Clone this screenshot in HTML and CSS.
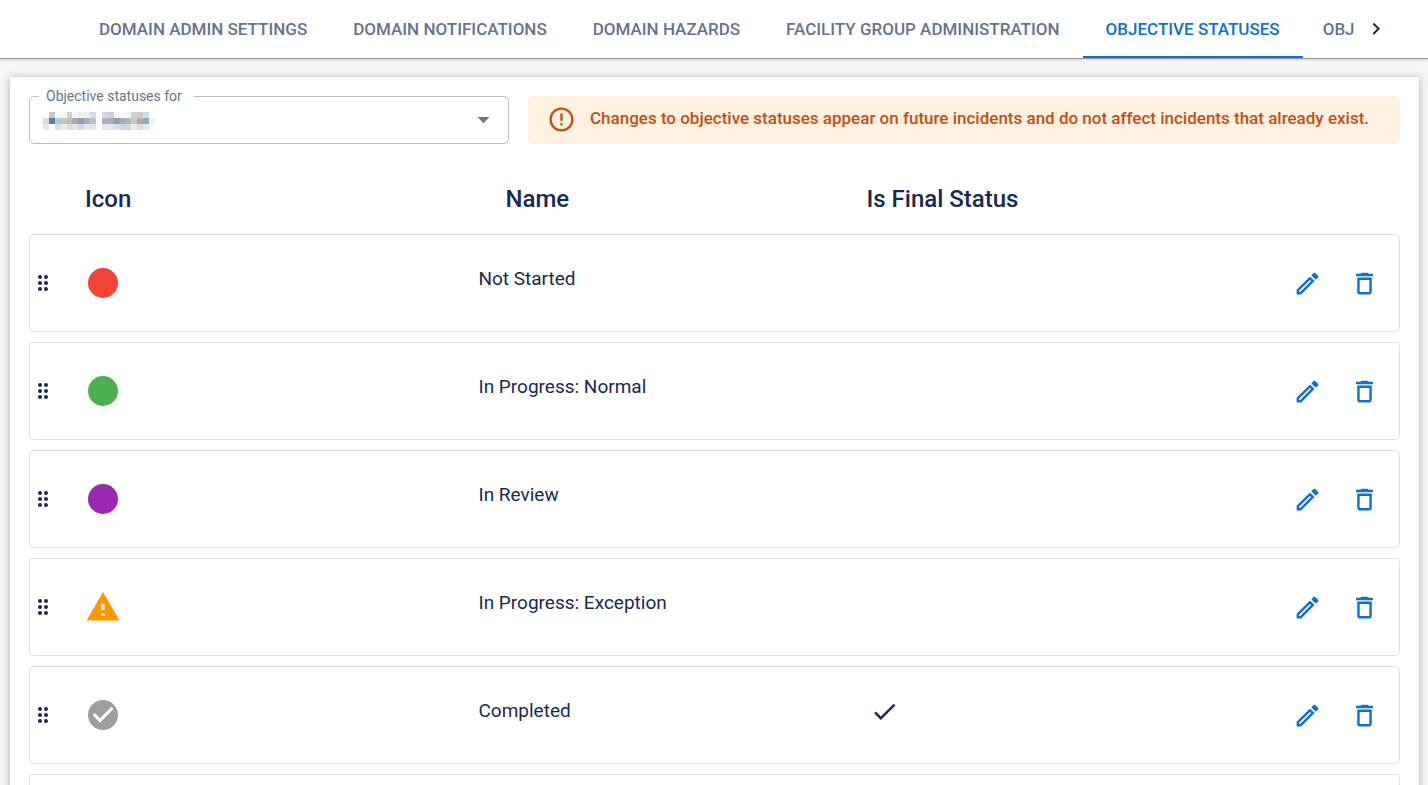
FILE: index.html
```html
<!DOCTYPE html>
<html lang="en">
<head>
    <meta charset="UTF-8">
    <meta name="viewport" content="width=device-width, initial-scale=1.0">
    <title>Objective Statuses</title>
    <link rel="stylesheet" href="styles.css">
</head>
<body>
    <!-- Shared icon shapes -->
    <svg class="sprite" aria-hidden="true">
        <symbol id="drag" viewBox="0 0 24 24">
            <circle cx="9" cy="6" r="2"/><circle cx="15" cy="6" r="2"/>
            <circle cx="9" cy="12" r="2"/><circle cx="15" cy="12" r="2"/>
            <circle cx="9" cy="18" r="2"/><circle cx="15" cy="18" r="2"/>
        </symbol>
        <symbol id="dot" viewBox="0 0 24 24"><circle cx="12" cy="12" r="10"/></symbol>
        <symbol id="warning" viewBox="0 0 24 24"><path d="M1 21h22L12 2 1 21zm12-3h-2v-2h2v2zm0-4h-2v-4h2v4z"/></symbol>
        <symbol id="done" viewBox="0 0 24 24"><path d="M12 2C6.48 2 2 6.48 2 12s4.48 10 10 10 10-4.48 10-10S17.52 2 12 2zm-2 15l-5-5 1.41-1.41L10 14.17l7.59-7.59L19 8l-9 9z"/></symbol>
        <symbol id="check" viewBox="0 0 24 24"><path d="M9 16.17L4.83 12l-1.42 1.41L9 19 21 7l-1.41-1.41z"/></symbol>
        <symbol id="edit" viewBox="0 0 24 24"><path d="M14.06 9.02l.92.92L5.92 19H5v-.92l9.06-9.06M17.66 3c-.25 0-.51.1-.7.29l-1.83 1.83 3.75 3.75 1.83-1.83c.39-.39.39-1.02 0-1.41l-2.34-2.34c-.2-.2-.45-.29-.71-.29zm-3.6 3.19L3 17.25V21h3.75L17.81 9.94l-3.75-3.75z"/></symbol>
        <symbol id="trash" viewBox="0 0 24 24"><path d="M6 19c0 1.1.9 2 2 2h8c1.1 0 2-.9 2-2V7H6v12zM8 9h8v10H8V9zm7.5-5l-1-1h-5l-1 1H5v2h14V4z"/></symbol>
    </svg>

    <nav class="tab-bar">
        <div class="tabs">
            <a class="tab" href="#">DOMAIN ADMIN SETTINGS</a>
            <a class="tab" href="#">DOMAIN NOTIFICATIONS</a>
            <a class="tab" href="#">DOMAIN HAZARDS</a>
            <a class="tab" href="#">FACILITY GROUP ADMINISTRATION</a>
            <a class="tab active" href="#">OBJECTIVE STATUSES</a>
            <a class="tab" href="#">OBJ</a>
        </div>
        <button type="button" class="scroll-btn" aria-label="Next tabs">
            <svg viewBox="0 0 24 24"><path d="M8.59 16.34l4.58-4.59-4.58-4.59L10 5.75l6 6-6 6z"/></svg>
        </button>
    </nav>

    <main>
        <div class="card">
            <div class="top-row">
                <div class="field">
                    <label for="domain">Objective statuses for</label>
                    <select id="domain"><option value=""></option></select>
                    <svg class="masked" viewBox="0 0 19 3" preserveAspectRatio="none" shape-rendering="crispEdges" aria-hidden="true">
                        <rect x="1" y="0" width="1" height="1" fill="#c8c8c8"/>
                        <rect x="2" y="0" width="2" height="1" fill="#f8f8f8"/>
                        <rect x="4" y="0" width="1" height="1" fill="#d5d0ca"/>
                        <rect x="5" y="0" width="1" height="1" fill="#f3f3f3"/>
                        <rect x="6" y="0" width="2" height="1" fill="#eeeef1"/>
                        <rect x="8" y="0" width="1" height="1" fill="#dadae0"/>
                        <rect x="10" y="0" width="1" height="1" fill="#d5d5e0"/>
                        <rect x="11" y="0" width="1" height="1" fill="#cacde0"/>
                        <rect x="12" y="0" width="1" height="1" fill="#f4f4f4"/>
                        <rect x="13" y="0" width="1" height="1" fill="#fafafa"/>
                        <rect x="14" y="0" width="1" height="1" fill="#f4f4f6"/>
                        <rect x="15" y="0" width="1" height="1" fill="#d0d4d6"/>
                        <rect x="16" y="0" width="1" height="1" fill="#d2c8cc"/>
                        <rect x="17" y="0" width="1" height="1" fill="#c8dfee"/>
                        <rect x="0" y="1" width="1" height="1" fill="#e4dad4"/>
                        <rect x="1" y="1" width="1" height="1" fill="#5f7c9e"/>
                        <rect x="2" y="1" width="1" height="1" fill="#aed0d2"/>
                        <rect x="3" y="1" width="1" height="1" fill="#c2c6c0"/>
                        <rect x="4" y="1" width="1" height="1" fill="#c2c0b8"/>
                        <rect x="5" y="1" width="1" height="1" fill="#acaab4"/>
                        <rect x="6" y="1" width="1" height="1" fill="#9a9cb4"/>
                        <rect x="7" y="1" width="1" height="1" fill="#a0b4c2"/>
                        <rect x="8" y="1" width="1" height="1" fill="#bec0c4"/>
                        <rect x="10" y="1" width="1" height="1" fill="#aab0c6"/>
                        <rect x="11" y="1" width="1" height="1" fill="#a8acc2"/>
                        <rect x="12" y="1" width="1" height="1" fill="#9c9cac"/>
                        <rect x="13" y="1" width="1" height="1" fill="#9eb2c6"/>
                        <rect x="14" y="1" width="1" height="1" fill="#aebac0"/>
                        <rect x="15" y="1" width="1" height="1" fill="#c6cac8"/>
                        <rect x="16" y="1" width="1" height="1" fill="#b2aab0"/>
                        <rect x="17" y="1" width="1" height="1" fill="#9aa8b8"/>
                        <rect x="18" y="1" width="1" height="1" fill="#e2f6ff"/>
                        <rect x="0" y="2" width="1" height="1" fill="#e4e8ee"/>
                        <rect x="1" y="2" width="1" height="1" fill="#fdfdfa"/>
                        <rect x="2" y="2" width="1" height="1" fill="#d0e2ec"/>
                        <rect x="3" y="2" width="1" height="1" fill="#e6ecf0"/>
                        <rect x="4" y="2" width="1" height="1" fill="#d6dee0"/>
                        <rect x="5" y="2" width="1" height="1" fill="#dfe4e6"/>
                        <rect x="6" y="2" width="1" height="1" fill="#d4d6e2"/>
                        <rect x="7" y="2" width="1" height="1" fill="#e6eaee"/>
                        <rect x="8" y="2" width="1" height="1" fill="#e2e4e6"/>
                        <rect x="10" y="2" width="2" height="1" fill="#e5e6ef"/>
                        <rect x="12" y="2" width="1" height="1" fill="#dcdee0"/>
                        <rect x="13" y="2" width="2" height="1" fill="#ced7e2"/>
                        <rect x="15" y="2" width="1" height="1" fill="#eceef0"/>
                        <rect x="16" y="2" width="1" height="1" fill="#dcdcdc"/>
                        <rect x="17" y="2" width="1" height="1" fill="#e2e8ee"/>
                        <rect x="18" y="2" width="1" height="1" fill="#f4fcff"/>
                    </svg>
                    <svg class="arrow" viewBox="0 0 24 24" aria-hidden="true"><path d="M7 10l5 5 5-5z"/></svg>
                </div>
                <div class="alert" role="alert">
                    <svg viewBox="0 0 24 24" aria-hidden="true"><path d="M11 15h2v2h-2zm0-8h2v6h-2zm.99-5C6.47 2 2 6.48 2 12s4.47 10 9.99 10C17.52 22 22 17.52 22 12S17.52 2 11.99 2zM12 20c-4.42 0-8-3.58-8-8s3.58-8 8-8 8 3.58 8 8-3.58 8-8 8z"/></svg>
                    <p>Changes to objective statuses appear on future incidents and do not affect incidents that already exist.</p>
                </div>
            </div>

            <table class="statuses">
                <thead>
                    <tr>
                        <th class="col-drag"></th>
                        <th class="col-icon">Icon</th>
                        <th class="col-name">Name</th>
                        <th class="col-final">Is Final Status</th>
                        <th class="col-actions"></th>
                    </tr>
                </thead>
                <tbody>
                    <tr>
                        <td class="drag"><svg><use href="#drag"/></svg></td>
                        <td class="icon red"><svg><use href="#dot"/></svg></td>
                        <td class="name">Not Started</td>
                        <td class="final"></td>
                        <td class="actions">
                            <div class="buttons">
                                <button type="button" aria-label="Edit"><svg><use href="#edit"/></svg></button>
                                <button type="button" aria-label="Delete"><svg><use href="#trash"/></svg></button>
                            </div>
                        </td>
                    </tr>
                    <tr>
                        <td class="drag"><svg><use href="#drag"/></svg></td>
                        <td class="icon green"><svg><use href="#dot"/></svg></td>
                        <td class="name">In Progress: Normal</td>
                        <td class="final"></td>
                        <td class="actions">
                            <div class="buttons">
                                <button type="button" aria-label="Edit"><svg><use href="#edit"/></svg></button>
                                <button type="button" aria-label="Delete"><svg><use href="#trash"/></svg></button>
                            </div>
                        </td>
                    </tr>
                    <tr>
                        <td class="drag"><svg><use href="#drag"/></svg></td>
                        <td class="icon purple"><svg><use href="#dot"/></svg></td>
                        <td class="name">In Review</td>
                        <td class="final"></td>
                        <td class="actions">
                            <div class="buttons">
                                <button type="button" aria-label="Edit"><svg><use href="#edit"/></svg></button>
                                <button type="button" aria-label="Delete"><svg><use href="#trash"/></svg></button>
                            </div>
                        </td>
                    </tr>
                    <tr>
                        <td class="drag"><svg><use href="#drag"/></svg></td>
                        <td class="icon orange"><svg><use href="#warning"/></svg></td>
                        <td class="name">In Progress: Exception</td>
                        <td class="final"></td>
                        <td class="actions">
                            <div class="buttons">
                                <button type="button" aria-label="Edit"><svg><use href="#edit"/></svg></button>
                                <button type="button" aria-label="Delete"><svg><use href="#trash"/></svg></button>
                            </div>
                        </td>
                    </tr>
                    <tr>
                        <td class="drag"><svg><use href="#drag"/></svg></td>
                        <td class="icon grey"><svg><use href="#done"/></svg></td>
                        <td class="name">Completed</td>
                        <td class="final"><svg><use href="#check"/></svg></td>
                        <td class="actions">
                            <div class="buttons">
                                <button type="button" aria-label="Edit"><svg><use href="#edit"/></svg></button>
                                <button type="button" aria-label="Delete"><svg><use href="#trash"/></svg></button>
                            </div>
                        </td>
                    </tr>
                    <tr>
                        <td class="drag"></td>
                        <td class="icon"></td>
                        <td class="name"></td>
                        <td class="final"></td>
                        <td class="actions"></td>
                    </tr>
                </tbody>
            </table>
        </div>
    </main>
</body>
</html>
```
FILE: styles.css
```css
* {
    box-sizing: border-box;
}

body {
    font-family: Roboto, "Liberation Sans", sans-serif;
    font-size: 19px;
    line-height: 28px;
    margin: 0;
    height: 100vh;
    display: flex;
    flex-direction: column;
    overflow: hidden;
    background: #f4f6f8;
    color: #172b4d;
}

svg {
    display: block;
    fill: currentColor;
}

button {
    border: none;
    background: none;
    padding: 0;
    color: inherit;
    cursor: pointer;
}

.sprite {
    position: absolute;
    width: 0;
    height: 0;
}

/* Tabs */
.tab-bar {
    flex: none;
    display: flex;
    height: 59px;
    padding: 0 34px 0 76px;
    background: #fff;
    border-bottom: 1px solid #999;
    box-shadow: 0 1px 2px rgba(0,0,0,0.15);
}

.tabs {
    flex: 1;
    display: flex;
    overflow: hidden;
}

.tab {
    flex: none;
    padding: 0 23px;
    font-size: 17px;
    font-weight: 500;
    line-height: 58px;
    color: #65748b;
    text-decoration: none;
}

.tab:last-child {
    padding: 0 0 0 20px;
}

.tab.active {
    color: #0f6fd6;
    border-bottom: 2px solid #0f6fd6;
}

.scroll-btn {
    display: flex;
    align-items: center;
    justify-content: center;
    width: 36px;
}

.scroll-btn svg {
    width: 24px;
    height: 24px;
}

/* Card */
main {
    flex: 1;
    min-height: 0;
    padding: 18px 9px 0 10px;
    overflow: hidden;
}

.card {
    min-height: 100%;
    padding: 19px;
    background: #fff;
    box-shadow: 0 1px 8px rgba(0,0,0,0.3);
}

.top-row {
    display: flex;
    gap: 19px;
}

.field {
    position: relative;
    width: 480px;
    height: 48px;
}

.field label {
    position: absolute;
    top: -10px;
    left: 10px;
    padding: 0 12px 0 7px;
    font-size: 14px;
    line-height: 20px;
    color: #65748b;
    background: #fff;
}

.field select {
    width: 100%;
    height: 100%;
    padding: 0 40px 0 16px;
    appearance: none;
    font: inherit;
    color: inherit;
    background: #fff;
    border: 1px solid #bdbdbd;
    border-radius: 5px;
}

.masked {
    position: absolute;
    top: 16px;
    left: 14px;
    width: 112px;
    height: 18px;
}

.arrow {
    position: absolute;
    top: 9px;
    right: 11px;
    width: 29px;
    height: 29px;
    color: #757575;
    pointer-events: none;
}

.alert {
    flex: 1;
    display: flex;
    align-items: center;
    gap: 14px;
    padding: 0 19px 2px;
    background: #fff1df;
    border-radius: 5px;
    color: #bf5015;
}

.alert svg {
    flex: none;
    width: 29px;
    height: 29px;
}

.alert p {
    margin: 0;
    padding-bottom: 2px;
    font-size: 17px;
    font-weight: 500;
    line-height: 24px;
    white-space: nowrap;
}

/* Status list */
.statuses {
    width: 100%;
    table-layout: fixed;
    border-collapse: separate;
    border-spacing: 0 10px;
}

th {
    height: 70px;
    padding: 20px 0 0;
    font-size: 24px;
    font-weight: 500;
    text-align: left;
}

.col-drag {
    width: 56px;
}

.col-icon {
    width: 28.7%;
}

.col-name {
    width: 28.3%;
    padding-left: 27px;
}

.col-actions {
    width: 130px;
}

td {
    height: 98px;
    padding: 0;
    border: 1px solid #dcdfe4;
    border-width: 1px 0;
}

td:first-child {
    border-left-width: 1px;
    border-radius: 5px 0 0 5px;
}

td:last-child {
    border-right-width: 1px;
    border-radius: 0 5px 5px 0;
}

.drag svg {
    width: 24px;
    height: 24px;
    margin-left: 1px;
}

.icon svg {
    width: 36px;
    height: 36px;
}

.red {
    color: #f44336;
}

.green {
    color: #4caf50;
}

.purple {
    color: #9c27b0;
}

.orange {
    color: #ff9800;
}

.grey {
    color: #9e9e9e;
}

.name,
.final {
    padding-bottom: 8px;
}

.final svg {
    width: 29px;
    height: 29px;
    margin-left: 4px;
}

.buttons {
    display: flex;
    justify-content: flex-end;
    gap: 28px;
    padding-right: 20px;
    color: #0f6fd6;
}

.buttons svg {
    width: 29px;
    height: 29px;
}
```
